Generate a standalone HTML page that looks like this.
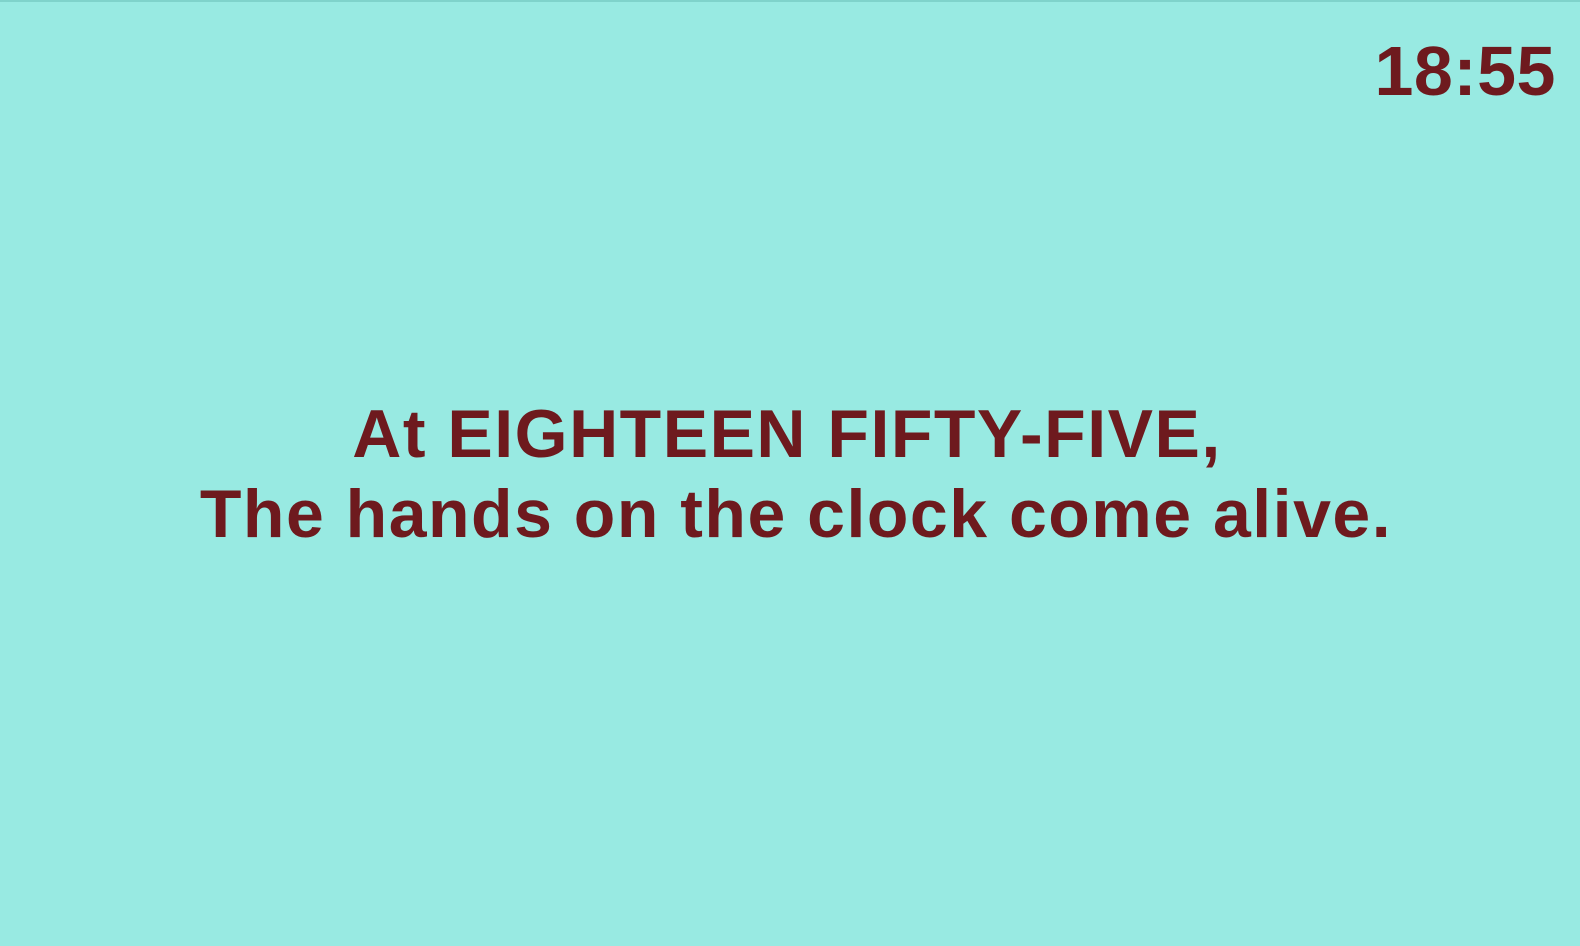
<!DOCTYPE html>
<html><head><style>
html,body{margin:0;padding:0;}
body{width:1580px;height:946px;background:#98eae2;border-top:2px solid #7fd3cb;box-sizing:border-box;position:relative;overflow:hidden;font-family:"Liberation Sans",Arial,sans-serif;font-weight:bold;color:#6e1a1e;}
.clock{position:absolute;right:24px;top:29px;font-size:70px;line-height:80px;letter-spacing:0.5px;}
.txt{position:absolute;left:0;width:1592px;top:392px;text-align:center;font-size:68px;line-height:80px;letter-spacing:1.5px;}
.l1{position:relative;left:-9px;}
</style></head><body>
<div class="clock">18:55</div>
<div class="txt"><span class="l1">At EIGHTEEN FIFTY-FIVE,</span><br>The hands on the clock come alive.</div>
</body></html>
